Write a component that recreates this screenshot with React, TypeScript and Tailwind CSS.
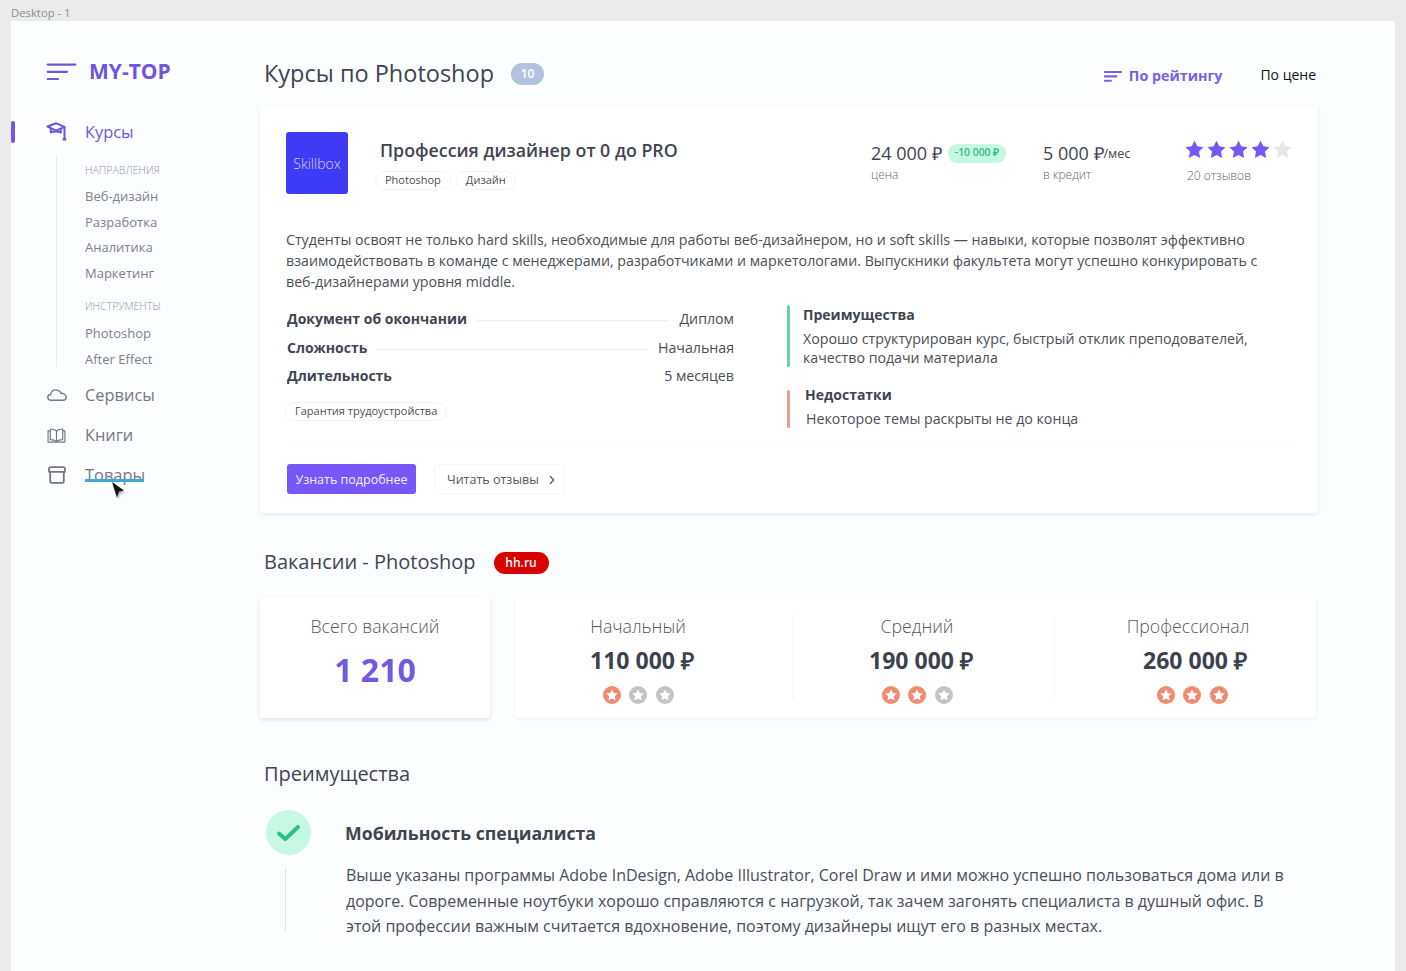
import { ChevronRight } from 'lucide-react';

const starPoints = '12,0.8 15.6,8 23.4,9.1 17.7,14.6 19.1,22.6 12,18.8 4.9,22.6 6.3,14.6 0.6,9.1 8.4,8';

function SortIcon({ className, width = 2.2 }: { className: string; width?: number }) {
  return (
    <svg viewBox="0 0 30 18" className={className} fill="none" stroke="currentColor" strokeWidth={width} strokeLinecap="round">
      <path d="M1.2 1.6H28.8" />
      <path d="M1.2 8.8H20.5" />
      <path d="M1.2 16H11.5" />
    </svg>
  );
}

function CapIcon() {
  return (
    <svg viewBox="0 0 22 20" className="h-[20px] w-[22px]" fill="none" stroke="currentColor" strokeWidth="2" strokeLinejoin="round" strokeLinecap="round">
      <path d="M1.5 4.5L10 1.2L18.5 4.8L10 8.6Z" />
      <path d="M4.8 7.5V10.5C7.5 9 12.5 9 14.8 10.5V7.5" />
      <path d="M18.5 5V14" />
      <path d="M17.2 17.8L18.5 14.5L19.8 17.8Z" strokeWidth="1.4" />
    </svg>
  );
}

function CloudIcon() {
  return (
    <svg viewBox="0 0 20 12" className="h-[12px] w-[20px]" fill="none" stroke="currentColor" strokeWidth="1.4" strokeLinejoin="round">
      <path d="M4 11.2C2 11.2 .8 10 .8 8.4C.8 6.8 2 5.6 3.6 5.5C4.2 2.8 6.2 .9 8.8 .9C11.2 .9 13 2.2 13.8 4.2C16.6 4 19.2 5.8 19.2 8.2C19.2 10 17.9 11.2 16 11.2Z" />
    </svg>
  );
}

function BookIcon() {
  return (
    <svg viewBox="0 0 20 16" className="h-[15px] w-[19px]" fill="none" stroke="currentColor" strokeWidth="1.2" strokeLinejoin="round">
      <path d="M10 3.2C8.4 1.6 6 1 3.4 1V12.4C6 12.4 8.4 13 10 14.4C11.6 13 14 12.4 16.6 12.4V1C14 1 11.6 1.6 10 3.2Z" />
      <path d="M10 3.2V14.4" />
      <path d="M3.4 3H1V15H19V3H16.6" />
    </svg>
  );
}

function BoxIcon() {
  return (
    <svg viewBox="0 0 18 18" className="h-[18px] w-[18px]" fill="none" stroke="currentColor" strokeWidth="1.8" strokeLinejoin="round" strokeLinecap="round">
      <path d="M1 5.8V3C1 2 1.8 1.2 2.8 1.2H15.2C16.2 1.2 17 2 17 3V5.8H1Z" />
      <path d="M2.2 5.8V15.4C2.2 16.2 2.8 16.8 3.6 16.8H14.4C15.2 16.8 15.8 16.2 15.8 15.4V5.8" />
    </svg>
  );
}

function RoundStar({ on }: { on: boolean }) {
  return (
    <span className={`flex h-[18px] w-[18px] items-center justify-center rounded-full ${on ? 'bg-[#f08a70]' : 'bg-[#c4c4c4]'}`}>
      <svg viewBox="0 0 24 24" className="h-[12px] w-[12px]" fill="#fff">
        <polygon points={starPoints} />
      </svg>
    </span>
  );
}

function Pill({ children }: { children: string }) {
  return (
    <span className="flex h-[19px] items-center rounded-full border border-[#f3f3f6] px-[9px] text-[11px] text-[#4a4e58]">
      {children}
    </span>
  );
}

function SubItem({ children }: { children: string }) {
  return <div className="flex h-[25.5px] items-center text-[13px] text-[#7d8089]">{children}</div>;
}

function SubLabel({ children }: { children: string }) {
  return <div className="flex h-[20px] items-center text-[10.5px] font-light text-[#8f929a]">{children}</div>;
}

function NavItem({ icon, label }: { icon: React.ReactNode; label: string }) {
  return (
    <div className="flex h-[40px] items-center text-[16.4px] text-[#74777f]">
      <span className="flex w-[39px] justify-center pr-[18px]">{icon}</span>
      <span>{label}</span>
    </div>
  );
}

function Sidebar() {
  return (
    <aside className="relative w-[249px] shrink-0 pl-[35px]">
      <div className="mt-[39px] flex h-[24px] items-center text-[#6f55dc]">
        <SortIcon className="h-[18px] w-[31px]" />
        <span className="ml-[12px] text-[21px] font-bold">MY-TOP</span>
      </div>

      <div className="mt-[36px] flex h-[24px] items-center text-[16.4px] text-[#6f55dc]">
        <span className="flex w-[39px]"><CapIcon /></span>
        <span>Курсы</span>
      </div>
      <span className="absolute top-[100px] left-0 h-[22px] w-[4px] rounded-full bg-[#7557ec]" />

      <div className="mt-[11px] ml-[10px] h-[212px] border-l border-[#e9e9ee] pt-[6px] pl-[28px]">
        <SubLabel>НАПРАВЛЕНИЯ</SubLabel>
        <div className="mt-[3px]">
          <SubItem>Веб-дизайн</SubItem>
          <SubItem>Разработка</SubItem>
          <SubItem>Аналитика</SubItem>
          <SubItem>Маркетинг</SubItem>
        </div>
        <div className="mt-[11px]">
          <SubLabel>ИНСТРУМЕНТЫ</SubLabel>
        </div>
        <div className="mt-[4px]">
          <SubItem>Photoshop</SubItem>
          <SubItem>After Effect</SubItem>
        </div>
      </div>

      <div className="mt-[8px]">
        <NavItem icon={<CloudIcon />} label="Сервисы" />
        <NavItem icon={<BookIcon />} label="Книги" />
        <NavItem icon={<BoxIcon />} label="Товары" />
      </div>

      {/* подчеркивание и курсор поверх пункта */}
      <span className="absolute top-[458px] left-[74px] h-[2.5px] w-[59px] bg-[#3fa6dc]" />
      <svg viewBox="0 0 16 18" className="absolute top-[460px] left-[100px] h-[18px] w-[16px] drop-shadow-[1px_2px_1px_rgba(0,0,0,0.35)]">
        <path d="M1 1L13 9.5L8 10.5L6 16.5Z" fill="#111" />
      </svg>
    </aside>
  );
}

function CourseCard() {
  return (
    <section className="mt-[10px] h-[407px] rounded-[3px] bg-white px-[26px] pt-[26px] shadow-[0_2px_4px_rgba(30,35,60,0.09)]">
      <div className="flex h-[62px]">
        <div className="flex h-[62px] w-[62px] items-center justify-center rounded-[3px] bg-[#3f3bf6] text-[14px] font-light text-[#d5d6ff]">
          Skillbox
        </div>
        <div className="ml-[32px] w-[491px]">
          <div className="mt-[5px] text-[17.8px] leading-[26px] font-semibold text-[#3f4450]">Профессия дизайнер от 0 до PRO</div>
          <div className="mt-[8px] -ml-[5px] flex gap-[5px]">
            <Pill>Photoshop</Pill>
            <Pill>Дизайн</Pill>
          </div>
        </div>
        <div className="w-[172px] pt-[9px]">
          <div className="flex h-[24px] items-center text-[18px] text-[#40444f]">
            24 000 ₽
            <span className="ml-[6px] flex h-[19px] items-center rounded-full bg-[#c4f8e2] px-[7px] text-[10.4px] font-semibold text-[#38b98a]">
              -10 000 ₽
            </span>
          </div>
          <div className="mt-[1px] text-[12px] font-light text-[#63666f]">цена</div>
        </div>
        <div className="w-[142px] pt-[9px]">
          <div className="flex h-[24px] items-center text-[18px] text-[#40444f]">
            5 000 ₽<span className="mt-[2px] text-[12.5px]">/мес</span>
          </div>
          <div className="mt-[1px] text-[12px] font-light text-[#63666f]">в кредит</div>
        </div>
        <div className="pt-[8px]">
          <div className="flex gap-[3px]">
            {[0, 1, 2, 3, 4].map((i) => (
              <svg key={i} viewBox="0 0 24 24" className="h-[19px] w-[19px]" fill={i < 4 ? '#7558f5' : '#e8e8e8'}>
                <polygon points={starPoints} />
              </svg>
            ))}
          </div>
          <div className="mt-[8px] ml-[2px] text-[12px] font-light text-[#63666f]">20 отзывов</div>
        </div>
      </div>

      <p className="mt-[35px] w-[990px] text-[14.2px] leading-[21px] text-[#4a4e58]">
        Студенты освоят не только hard skills, необходимые для работы веб-дизайнером, но и soft skills — навыки, которые позволят эффективно взаимодействовать в команде с менеджерами, разработчиками и маркетологами. Выпускники факультета могут успешно конкурировать с веб-дизайнерами уровня middle.
      </p>

      <div className="mt-[13px] flex h-[139px] border-b border-[#fafafb]">
        <div className="-mt-[0.5px] w-[448px] pl-[1px]">
          {[
            ['Документ об окончании', 'Диплом'],
            ['Сложность', 'Начальная'],
            ['Длительность', '5 месяцев'],
          ].map(([label, value], i) => (
            <div key={label} className="flex h-[28.5px] items-center text-[14px]">
              <span className="font-bold text-[#3f4450]">{label}</span>
              <span className={`mx-[10px] mt-[4px] flex-1 border-b border-dotted ${i < 2 ? 'border-[#e4e4e8]' : 'border-transparent'}`} />
              <span className="text-[14.2px] text-[#4a4e58]">{value}</span>
            </div>
          ))}
          <div className="mt-[11.5px] -ml-[2px] flex">
            <Pill>Гарантия трудоустройства</Pill>
          </div>
        </div>
        <div className="ml-[53px] flex-1">
          <div className="flex h-[62px]">
            <span className="h-[62px] w-[3px] rounded-sm bg-[#64d4ab]" />
            <div className="ml-[13px] text-[14.2px] text-[#4a4e58]">
              <div className="text-[14px] leading-[20px] font-bold text-[#3f4450]">Преимущества</div>
              <div className="mt-[4px] leading-[19px]">
                Хорошо структурирован курс, быстрый отклик преподователей,<br />
                качество подачи материала
              </div>
            </div>
          </div>
          <div className="mt-[23px] flex h-[38px]">
            <span className="h-[38px] w-[3px] rounded-sm bg-[#e79f8b]" />
            <div className="-mt-[5px] ml-[15px] text-[14.2px] text-[#4a4e58]">
              <div className="text-[14px] leading-[20px] font-bold text-[#3f4450]">Недостатки</div>
              <div className="mt-[4px] ml-[1px] leading-[20px]">Некоторое темы раскрыты не до конца</div>
            </div>
          </div>
        </div>
      </div>

      <div className="mt-[20px] flex h-[30px] pl-[1px]">
        <button className="h-[30px] w-[129px] rounded-[3px] bg-[#7857f8] pt-[2px] text-[12.5px] text-[#f1edff]">Узнать подробнее</button>
        <button className="ml-[18px] flex h-[30px] w-[131px] items-center rounded-[3px] border border-[#f5f5f8] pt-[2px] pl-[12px] text-[12.5px] text-[#55585f]">
          Читать отзывы
          <ChevronRight className="ml-[6px] h-[14px] w-[14px]" strokeWidth={2} />
        </button>
      </div>
    </section>
  );
}

function Vacancies() {
  const titleClass = 'mt-[16px] text-[17.7px] leading-[26px] font-light text-[#55585f]';
  const salaryClass = 'mt-[5px] text-[23px] leading-[32px] font-bold text-[#3d4250]';
  const starsClass = 'mt-[10px] flex gap-[8.5px]';
  return (
    <section className="mt-[36px]">
      <div className="flex h-[26px] items-center pl-[4px]">
        <h2 className="text-[20px] text-[#3f4450]">Вакансии - Photoshop</h2>
        <span className="mt-[1px] ml-[18px] flex h-[22px] w-[55px] items-center justify-center rounded-full bg-[#d90000] text-[12px] font-semibold text-white">hh.ru</span>
      </div>
      <div className="mt-[22px] flex h-[121px] pr-[2px]">
        <div className="flex w-[230px] flex-col items-center rounded-[4px] bg-white shadow-[0_2px_4px_rgba(30,35,60,0.13)]">
          <div className={titleClass}>Всего вакансий</div>
          <div className="mt-[9px] text-[32px] leading-[44px] font-bold text-[#7358e0]">1 210</div>
        </div>
        <div className="ml-[25px] flex flex-1 rounded-[4px] bg-white shadow-[0_1px_3px_rgba(30,35,60,0.08)]">
          <div className="mr-[31px] flex w-[246px] shrink-0 flex-col items-center">
            <div className={titleClass}>Начальный</div>
            <div className={`${salaryClass} ml-[8px]`}>110 000 ₽</div>
            <div className={starsClass}>
              <RoundStar on /><RoundStar on={false} /><RoundStar on={false} />
            </div>
          </div>
          <div className="my-[17px] w-px shrink-0 bg-[#f8f8fa]" />
          <div className="mr-[13px] flex w-[248px] shrink-0 flex-col items-center">
            <div className={titleClass}>Средний</div>
            <div className={`${salaryClass} ml-[8px]`}>190 000 ₽</div>
            <div className={starsClass}>
              <RoundStar on /><RoundStar on /><RoundStar on={false} />
            </div>
          </div>
          <div className="my-[17px] w-px shrink-0 bg-[#f8f8fa]" />
          <div className="flex w-[261px] shrink-0 flex-col items-center pl-[5px]">
            <div className={titleClass}>Профессионал</div>
            <div className={`${salaryClass} ml-[14px]`}>260 000 ₽</div>
            <div className={`${starsClass} ml-[8px]`}>
              <RoundStar on /><RoundStar on /><RoundStar on />
            </div>
          </div>
        </div>
      </div>
    </section>
  );
}

function Benefits() {
  return (
    <section className="mt-[42px] pl-[6px]">
      <h2 className="-ml-[2px] text-[20px] leading-[28px] text-[#3f4450]">Преимущества</h2>
      <div className="mt-[22px] flex">
        <div className="flex w-[45px] shrink-0 flex-col items-center">
          <span className="flex h-[45px] w-[45px] items-center justify-center rounded-full bg-[#c6f9e3]">
            <svg viewBox="0 0 24 20" className="h-[20px] w-[25px]" fill="none" stroke="#2fbf8a" strokeWidth="4" strokeLinecap="round" strokeLinejoin="round">
              <path d="M2.5 10.5L8.8 16L21.5 4" />
            </svg>
          </span>
          <span className="mt-[14px] h-[63px] w-px -translate-x-[3px] bg-[#e3e3e8]" />
        </div>
        <div className="ml-[34px] w-[946px]">
          <h3 className="mt-[9px] text-[17.7px] leading-[28px] font-bold text-[#3f4450]">Мобильность специалиста</h3>
          <p className="mt-[16px] ml-[1px] text-[16px] leading-[25.5px] text-[#4a4e58]">
            Выше указаны программы Adobe InDesign, Adobe Illustrator, Corel Draw и ими можно успешно пользоваться дома или в дороге. Современные ноутбуки хорошо справляются с нагрузкой, так зачем загонять специалиста в душный офис. В этой профессии важным считается вдохновение, поэтому дизайнеры ищут его в разных местах.
          </p>
        </div>
      </div>
      <span className="mt-[33px] block h-[45px] w-[45px] rounded-full bg-[#c6f9e3]" />
    </section>
  );
}

export default function App() {
  return (
    <div className="h-[971px] w-full overflow-hidden bg-[#ebebeb] font-['Open_Sans',sans-serif]">
      <div className="h-[21px] pt-[6px] pl-[11px] text-[11.3px] leading-[14px] text-[#8e8e8e]">Desktop - 1</div>
      <div className="mx-[11px] flex h-[950px] overflow-hidden bg-[#fcfdff]">
        <Sidebar />
        <main className="w-[1058px] shrink-0">
          <header className="mt-[31px] flex h-[44px] items-center pl-[4px]">
            <h1 className="text-[23.5px] text-[#3f4450]">Курсы по Photoshop</h1>
            <span className="ml-[17px] flex h-[22px] w-[33px] items-center justify-center rounded-full bg-[#b3c2de] text-[12px] font-semibold text-white">10</span>
            <div className="ml-auto flex translate-y-[2px] items-center pr-[2px] text-[14px]">
              <span className="flex items-center text-[14.3px] font-bold text-[#7a60e2]">
                <SortIcon className="mr-[7px] h-[11px] w-[18px]" width={3.4} />
                По рейтингу
              </span>
              <span className="-mt-[4px] ml-[38px] text-[#111]">По цене</span>
            </div>
          </header>
          <CourseCard />
          <Vacancies />
          <Benefits />
        </main>
      </div>
    </div>
  );
}
